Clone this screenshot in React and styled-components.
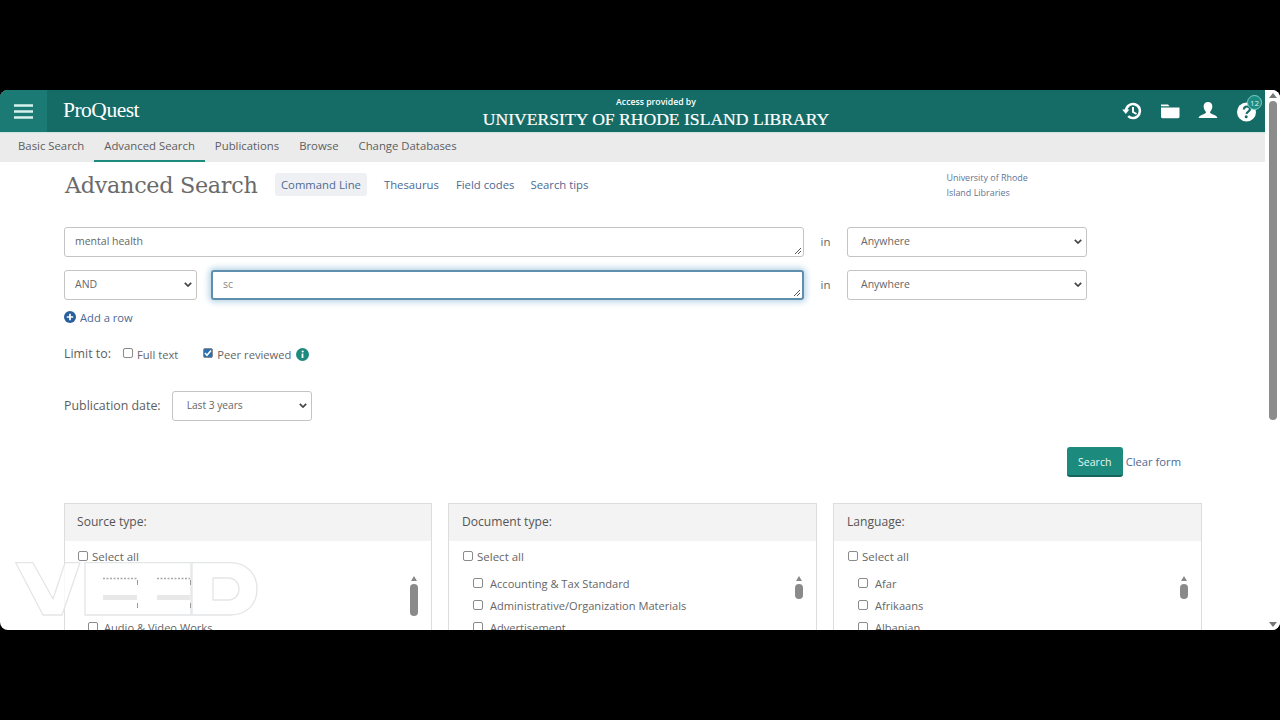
import React from "react";
import styled, { createGlobalStyle } from "styled-components";

const Global = createGlobalStyle`
  html, body { margin: 0; padding: 0; background: #000; height: 100%; overflow: hidden; }
  * { box-sizing: border-box; }
`;
const sans = `"Open Sans", "Noto Sans", sans-serif`;

const Frame = styled.div`
  margin-top: 90px; width: 1280px; height: 540px; background: #fff; border-radius: 8px;
  overflow: hidden; display: flex; position: relative; font-family: ${sans}; color: #555;
`;
const Main = styled.div`flex: 1; min-width: 0; display: flex; flex-direction: column;`;
const Header = styled.header`
  height: 43px; background: #156b66; border-bottom: 1px solid #cfe3e0; display: flex; align-items: center; color: #fff; flex: none;
`;
const Burger = styled.button`
  width: 47px; height: 42px; border: 0; background: #1b7a73; display: flex; align-items: center; justify-content: center; padding: 0; flex: none;
`;
const Logo = styled.div`
  font: 21.5px/1 "Liberation Serif", serif; margin-left: 16px; width: 408px; letter-spacing: -0.5px; flex: none;
`;
const Access = styled.div`width: 370px; text-align: center; flex: none; align-self: flex-start; padding-top: 6.5px;`;
const Small = styled.div`font-size: 8.7px; line-height: 11px; font-weight: 600;`;
const Uni = styled.div`font: 17.6px/21px "Liberation Serif", serif; white-space: nowrap; margin-top: 1px; -webkit-text-stroke: 0.2px #fff;`;
const Tools = styled.div`margin-left: auto; display: flex; gap: 16px; padding-right: 8px; align-items: center;`;
const Tool = styled.span`width: 22px; height: 22px; position: relative; display: block;`;
const Badge = styled.span`
  position: absolute; right: -5px; top: -5px; width: 15px; height: 15px; border-radius: 50%; background: #1c8c82; border: 1px solid #7fd0c6;
  font-size: 8px; line-height: 13px; text-align: center; color: #d8f2ee;
`;
const Nav = styled.nav`height: 29px; background: #ebebeb; display: flex; flex: none; padding-left: 8px; font-size: 11.35px;`;
const NavItem = styled.a`
  padding: 0 10px; line-height: 26px; color: #5e5e5e; height: 29px; border-bottom: 2px solid ${p => p.$active ? "#1c8a7c" : "transparent"};
`;
const Content = styled.div`flex: 1; min-height: 0; overflow: hidden; padding-left: 64px;`;
const Inner = styled.div`width: 1138px;`;
const TitleRow = styled.div`display: flex; align-items: center; height: 46px; margin-bottom: 19px;`;
const Title = styled.h1`font: 400 22.3px/1 "DejaVu Serif", serif; margin: 0; color: #6a6a6a; width: 217px; padding-left: 1px; white-space: nowrap; letter-spacing: -0.3px; flex: none;`;
const SubLink = styled.a`
  font-size: 11.3px; color: #4d6a94; margin-right: ${p => p.$mr}px; margin-top: -2px; white-space: nowrap;
  ${p => p.$box && "background:#eef0f3; padding: 4px 6px; border-radius: 3px; margin-left:-6px;"}
`;
const Libs = styled.div`font-size: 8.95px; line-height: 15px; color: #5f7596; margin-left: 358px; width: 100px; margin-top: -1px;`;
const Row = styled.div`display: flex; align-items: center; height: 30px; margin-bottom: 13px;`;
const Field = styled.div`
  position: relative; height: 30px; width: ${p => p.$w}px; border-radius: 3px; padding: 0 10px; font-size: 10.5px; line-height: 27px; color: #666; background: #fff; flex: none;
  border: 1px solid ${p => p.$focus ? "#5f8fad" : "#c4c4c4"};
  ${p => p.$focus && "box-shadow: 0 0 6px 2px #b5d3e6; border-width: 2px; line-height: 25px; margin-left: 14px; color: #888;"}
`;
const Grip = styled.svg`position: absolute; right: 1px; bottom: 1px; width: 8px; height: 8px;`;
const In = styled.span`width: 43px; text-align: center; font-size: 11.5px; color: #666; flex: none; padding-bottom: 2px;`;
const Sel = styled.div`
  width: ${p => p.$w}px; height: 30px; border: 1px solid #c4c4c4; border-radius: 3px; display: flex; align-items: center; flex: none;
  padding: 0 4px 2px ${p => p.$pl}px; font-size: ${p => p.$fs || 10.5}px; color: #666; justify-content: space-between;
`;
const Chev = () => <svg width="8" height="5" viewBox="0 0 8 5"><path d="M.8.8l3.2 3.2L7.200.8" fill="none" stroke="#444" strokeWidth="1.700"/></svg>;
const AddRow = styled.div`display: flex; align-items: center; gap: 4px; font-size: 11.2px; color: #4d6a94; height: 18px; margin-top: -5px;`;
const LimitRow = styled.div`display: flex; align-items: center; height: 20px; margin-top: 18px;`;
const Lab = styled.span`font-size: 12.400px; color: #5e5e5e; white-space: nowrap; transform: translateY(-1px);`;
const Box = styled.span`
  display: inline-block; width: 10px; height: 10px; border: 1px solid #8a8a8a; border-radius: 2px; background: ${p => p.$on ? "#2a6fb0" : "#fff"}; flex: none; position: relative;
  margin-left: ${p => p.$ml || 0}px; transform: translateY(${p => p.$dy || 0}px);
`;
const Opt = styled.span`white-space: nowrap; color: #666; font-size: 11.2px; margin-left: 4px;`;
const InfoIcon = styled.svg`margin-left: 5px; flex: none;`;
const CheckIcon = styled.svg`display: block; margin: -1px;`;
const DateRow = styled.div`display: flex; align-items: center; margin-top: 27px; gap: 11px;`;
const Actions = styled.div`display: flex; justify-content: flex-end; align-items: center; margin-top: 26px; padding-right: 21px; gap: 3px; height: 30px;`;
const SearchBtn = styled.button`
  width: 56px; height: 30px; background: #1c8a7c; border: 0; border-bottom: 2px solid #14665c; border-radius: 3px; color: #e6f6f3; font: 10.6px ${sans}; padding: 1px 0 0;
`;
const Clear = styled.a`font-size: 11.2px; color: #4d6a94; white-space: nowrap; margin-bottom: 2px;`;
const Panels = styled.div`display: grid; grid-template-columns: 368px 369px 369px; gap: 16px; margin-top: 26px;`;
const Panel = styled.section`border: 1px solid #ddd; border-bottom: 0; height: 140px; overflow: hidden; position: relative;`;
const PanelHead = styled.div`height: 37px; background: #f3f3f3; font-size: 12.100px; font-weight: 500; color: #555; padding-left: ${p => p.$x}px; line-height: 35px;`;
const SelectAll = styled.div`display: flex; align-items: center; gap: 4px; margin: 7px 0 0 ${p => p.$x + 1}px; height: 16px; font-size: 11.5px; color: #666;`;
const Item = styled.div`display: flex; align-items: center; gap: ${p => p.$gap}px; margin-left: ${p => p.$x}px; height: 22px; font-size: 11.1px; color: #666; white-space: nowrap;`;
const Items = styled.div`margin-top: 8px;`;
const MiniBar = styled.div`position: absolute; right: 13px; top: 72px; width: 8px; display: flex; flex-direction: column; align-items: center; gap: 3px;`;
const Arrow = styled.span`width: 0; height: 0; border: 3.5px solid transparent; border-top: 0; border-bottom: 5px solid #888;`;
const MiniThumb = styled.span`display: block; width: 7.500px; height: ${p => p.$h}px; border-radius: 4px; background: #8a8a8a;`;
const Bar = styled.aside`width: 15px; flex: none; background: #fff; display: flex; flex-direction: column; align-items: center; padding: 3px 0; justify-content: space-between;`;
const BarThumb = styled.div`width: 8px; height: 319px; border-radius: 4px; background: #8c8c8c; margin-top: 3px;`;
const BarUp = styled.span`width:0;height:0;border:4px solid transparent;border-top:0;border-bottom:5px solid #777;`;
const BarDown = styled.span`width:0;height:0;border:4px solid transparent;border-bottom:0;border-top:5px solid #777;`;
const BarTop = styled.div`display:flex;flex-direction:column;align-items:center;`;
const Mark = styled.svg`position: absolute; left: 15px; top: 472px; width: 243px; height: 54px; pointer-events: none;`;

const Check = () => <CheckIcon width="10" height="10" viewBox="0 0 10 10"><path d="M2 5l2 2.200L8 2.600" fill="none" stroke="#fff" strokeWidth="1.600"/></CheckIcon>;
const GripIcon = () => <Grip viewBox="0 0 8 8"><path d="M1 7L7 1M4 7l3-3" stroke="#555" strokeWidth="1"/></Grip>;

const FilterPanel = ({ title, items, thumb, x, itemX, gap }) => (
  <Panel>
    <PanelHead $x={x}>{title}</PanelHead>
    <SelectAll $x={x}><Box />Select all</SelectAll>
    <Items>{items.map((i, n) => <Item key={n} $x={itemX} $gap={gap}><Box />{i}</Item>)}</Items>
    <MiniBar><Arrow /><MiniThumb $h={thumb} /></MiniBar>
  </Panel>
);

export default function App() {
  return (
    <Frame>
      <Global />
      <Main>
        <Header>
          <Burger aria-label="menu">
            <svg width="19" height="15" viewBox="0 0 19 15"><path d="M0 1.500h19M0 7.500h19M0 13.500h19" stroke="#d8f2ee" strokeWidth="2.400"/></svg>
          </Burger>
          <Logo>ProQuest</Logo>
          <Access>
            <Small>Access provided by</Small>
            <Uni>UNIVERSITY OF RHODE ISLAND LIBRARY</Uni>
          </Access>
          <Tools>
            <Tool><svg viewBox="0 0 22 22" width="22" height="22"><path d="M5 11a7 7 0 1 1 2.200 5.100" fill="none" stroke="#fff" strokeWidth="2.600"/><path d="M1.200 9.500h7.200L4.800 14z" fill="#fff"/><path d="M12 7v5l3.500 2" fill="none" stroke="#fff" strokeWidth="2"/></svg></Tool>
            <Tool><svg viewBox="0 0 22 22" width="22" height="22"><path d="M2 4.500h7l1.500 1.800H2z" fill="#fff"/><path d="M2 7.600h18.500v9.200a1.400 1.400 0 0 1-1.400 1.400H3.400A1.400 1.400 0 0 1 2 16.800z" fill="#fff"/></svg></Tool>
            <Tool><svg viewBox="0 0 22 22" width="22" height="22"><path d="M11 2c3 0 4.600 2.300 4.300 5-.2 2.200-1.200 3.800-2.300 5 .1 1 .8 1.600 2.500 2.300 2.600 1 4.500 1.700 5 3.700H1.500c.5-2 2.400-2.700 5-3.700C8.200 13.600 8.900 13 9 12 7.900 10.800 6.900 9.200 6.700 7 6.400 4.300 8 2 11 2z" fill="#fff"/></svg></Tool>
            <Tool>
              <svg viewBox="0 0 22 22" width="22" height="22"><circle cx="11.500" cy="12" r="9.500" fill="#fff"/><path d="M8.800 9.500c.2-2 1.700-3 3.200-3 1.700 0 3 1 3 2.600 0 2.400-3.300 2.400-3.500 4.700" fill="none" stroke="#156b66" strokeWidth="2.200"/><circle cx="11.200" cy="16.800" r="1.500" fill="#156b66"/></svg>
              <Badge>12</Badge>
            </Tool>
          </Tools>
        </Header>
        <Nav>
          <NavItem>Basic Search</NavItem>
          <NavItem $active>Advanced Search</NavItem>
          <NavItem>Publications</NavItem>
          <NavItem>Browse</NavItem>
          <NavItem>Change Databases</NavItem>
        </Nav>
        <Content>
          <Inner>
            <TitleRow>
              <Title>Advanced Search</Title>
              <SubLink $box $mr={17}>Command Line</SubLink>
              <SubLink $mr={17}>Thesaurus</SubLink>
              <SubLink $mr={16}>Field codes</SubLink>
              <SubLink $mr={0}>Search tips</SubLink>
              <Libs>University of Rhode Island Libraries</Libs>
            </TitleRow>
            <Row>
              <Field $w={740}>mental health<GripIcon /></Field>
              <In>in</In>
              <Sel $w={240} $pl={13}>Anywhere<Chev /></Sel>
            </Row>
            <Row>
              <Sel $w={133} $pl={10}>AND<Chev /></Sel>
              <Field $w={593} $focus>sc<GripIcon /></Field>
              <In>in</In>
              <Sel $w={240} $pl={13}>Anywhere<Chev /></Sel>
            </Row>
            <AddRow>
              <svg width="12" height="12" viewBox="0 0 12 12"><circle cx="6" cy="6" r="6" fill="#2a5f9e"/><path d="M6 2.800v6.400M2.800 6h6.400" stroke="#fff" strokeWidth="1.700"/></svg>
              Add a row
            </AddRow>
            <LimitRow>
              <Lab>Limit to:</Lab>
              <Box $dy={-1} $ml={12} />
              <Opt>Full text</Opt>
              <Box $on $dy={-1} $ml={25}><Check /></Box>
              <Opt>Peer reviewed</Opt>
              <InfoIcon width="13" height="13" viewBox="0 0 13 13"><circle cx="6.500" cy="6.500" r="6.500" fill="#1c8a7c"/><path d="M6.500 5.500v4.500" stroke="#fff" strokeWidth="1.800"/><circle cx="6.700" cy="3.500" r="1.100" fill="#fff"/></InfoIcon>
            </LimitRow>
            <DateRow>
              <Lab>Publication date:</Lab>
              <Sel $w={140} $pl={14} $fs={10.2}>Last 3 years<Chev /></Sel>
            </DateRow>
            <Actions>
              <SearchBtn>Search</SearchBtn>
              <Clear>Clear form</Clear>
            </Actions>
            <Panels>
              <FilterPanel title="Source type:" thumb={32} x={12} itemX={23} gap={6} items={["", "", "Audio & Video Works"]} />
              <FilterPanel title="Document type:" thumb={15} x={13} itemX={24} gap={7} items={["Accounting & Tax Standard", "Administrative/Organization Materials", "Advertisement"]} />
              <FilterPanel title="Language:" thumb={15} x={13} itemX={24} gap={7} items={["Afar", "Afrikaans", "Albanian"]} />
            </Panels>
          </Inner>
        </Content>
      </Main>
      <Bar>
        <BarTop><BarUp /><BarThumb /></BarTop>
        <BarDown />
      </Bar>
      <Mark viewBox="0 0 243 54" aria-hidden="true">
        <g stroke="#e4e5e6" strokeWidth="1.300" strokeLinejoin="round">
          <path d="M.7.7H18L38 37 50 .7H65L47 53H28z" fill="rgba(255,255,255,.78)"/>
          <path d="M70 .7H176V53H70z" fill="#fff"/>
          <path fillRule="evenodd" d="M177 .7H215C232 .7 242 12 242 27 242 42 232 53 215 53H177zM198 16V38H213C220 38 224 33 224 27 224 21 220 16 213 16z" fill="rgba(255,255,255,.85)"/>
        </g>
        <path d="M88 33h34v5H88zM142 33h33v5h-33z" fill="#e8e8e8"/>
        <path d="M88 16.500h34M142 16.500h33" stroke="#a8a8a8" strokeWidth="1.600" strokeDasharray="2 1.500"/>
        <path d="M122.500 18v5M175.500 18v5M122.500 41v5M175.500 41v5" stroke="#9a9a9a" strokeWidth="1"/>
      </Mark>
    </Frame>
  );
}
